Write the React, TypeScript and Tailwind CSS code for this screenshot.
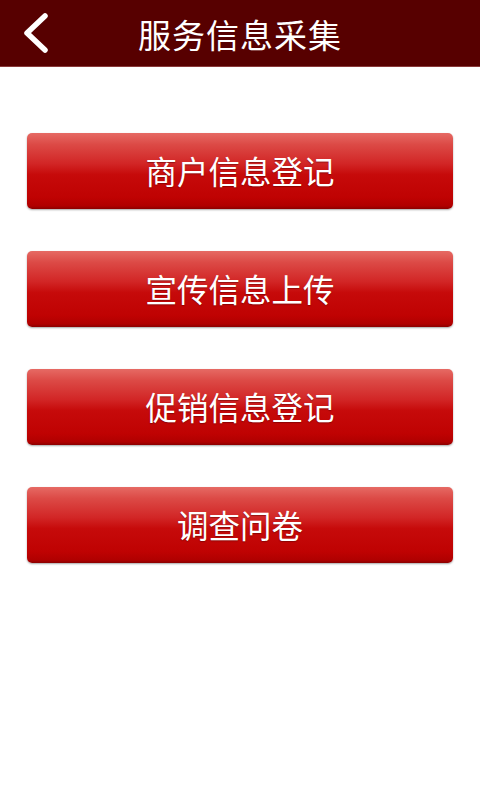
import React from "react";

const items = ["商户信息登记", "宣传信息上传", "促销信息登记", "调查问卷"];

export default function App() {
  return (
    <div
      className="w-[480px] h-[800px] bg-white flex flex-col"
      style={{ fontFamily: '"Noto Sans CJK SC", "Noto Sans", sans-serif' }}
    >
      <div className="relative h-[67px] bg-[#570000] border-b border-[#8a3a3a] flex items-center justify-center shrink-0">
        <svg
          className="absolute left-[21px] top-[12px]"
          width="30"
          height="42"
          viewBox="0 0 30 42"
        >
          <path
            d="M24 4 L6 21 L24 38"
            fill="none"
            stroke="#ffffff"
            strokeWidth="5.5"
            strokeLinecap="round"
            strokeLinejoin="round"
          />
        </svg>
        <span className="text-white text-[33px] leading-none tracking-[1px] mt-[2px]">
          服务信息采集
        </span>
      </div>
      <div className="flex flex-col gap-[42px] px-[27px] pt-[66px]">
        {items.map((t) => (
          <div
            key={t}
            className="h-[76px] w-[426px] rounded-[5px] flex items-center justify-center bg-[linear-gradient(to_bottom,#e66a64_0%,#dc4a46_15%,#d22626_40%,#c60a0a_55%,#bf0202_85%,#b00000_96%,#8a0000_100%)] shadow-[0_1px_2px_rgba(0,0,0,0.35)]"
          >
            <span className="text-white text-[31.5px] leading-none [text-shadow:0_1px_1px_rgba(90,0,0,0.5)]">
              {t}
            </span>
          </div>
        ))}
      </div>
    </div>
  );
}
